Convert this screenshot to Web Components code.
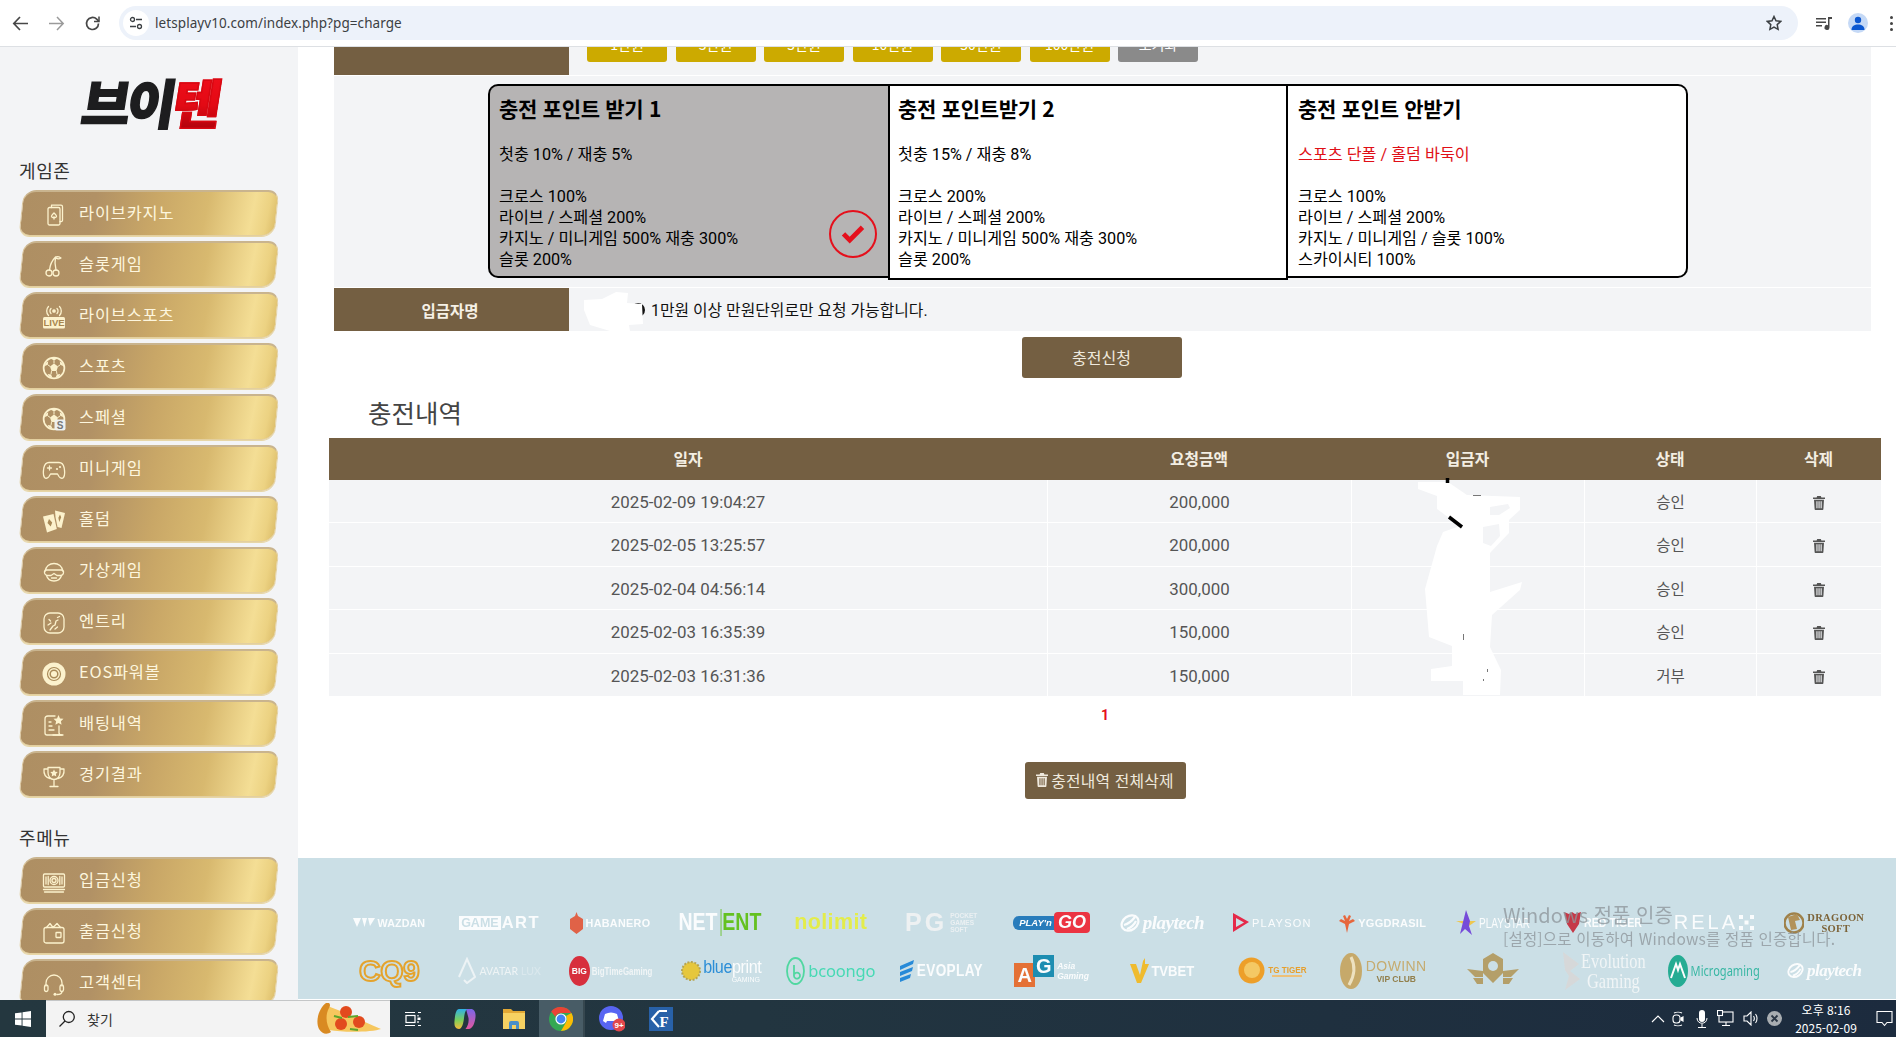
<!DOCTYPE html>
<html lang="ko"><head><meta charset="utf-8"><title>charge</title>
<style>
html,body{margin:0;height:100%;overflow:hidden;background:#fff}
body{width:1896px;height:1037px;display:flex;flex-direction:column;font-family:Roboto,"Noto Sans CJK KR",sans-serif;font-size:16px;color:#000}
</style></head><body>
<chrome-bar></chrome-bar>
<app-shell>
  <side-nav slot="side">
    <nav-group title="게임존">
      <nav-item icon="casino">라이브카지노</nav-item>
      <nav-item icon="slot">슬롯게임</nav-item>
      <nav-item icon="live">라이브스포츠</nav-item>
      <nav-item icon="ball">스포츠</nav-item>
      <nav-item icon="special">스페셜</nav-item>
      <nav-item icon="pad">미니게임</nav-item>
      <nav-item icon="cards">홀덤</nav-item>
      <nav-item icon="vr">가상게임</nav-item>
      <nav-item icon="entry">엔트리</nav-item>
      <nav-item icon="eos">EOS파워볼</nav-item>
      <nav-item icon="bets">배팅내역</nav-item>
      <nav-item icon="trophy">경기결과</nav-item>
    </nav-group>
    <nav-group title="주메뉴" class="second">
      <nav-item icon="money">입금신청</nav-item>
      <nav-item icon="wallet">출금신청</nav-item>
      <nav-item icon="headset">고객센터</nav-item>
    </nav-group>
  </side-nav>
  <charge-form></charge-form>
  <history-table></history-table>
  <provider-footer></provider-footer>
  <redaction-marks></redaction-marks>
</app-shell>
<win-taskbar></win-taskbar>
<script>
const def=(name,html,extra)=>{customElements.define(name,class extends HTMLElement{
  constructor(){super();this.attachShadow({mode:'open'}).innerHTML=html;if(extra)extra.call(this)}
})};
const TRASH='<svg width="12" height="14" viewBox="0 0 12 14" fill="currentColor"><path d="M4.200 0h3.600l.6 1.400H12v1.500H0V1.400h3.600zM1 3.800h10l-.6 9.200c0 .6-.5 1-1 1H2.600c-.5 0-1-.4-1-1zm2.400 1.500v7h1.100v-7zm2.100 0v7h1.100v-7zm2.100 0v7h1.100v-7z"/></svg>';

def('chrome-bar',`<style>
:host{display:flex;align-items:center;height:46px;flex:none;background:#fff;border-bottom:1px solid #dde0e4;position:relative;z-index:3;overflow:hidden}
.nav{display:flex;width:119px;flex:none;padding-left:12px;box-sizing:border-box;gap:19px}
.omni{flex:none;width:1679px;height:34px;border-radius:17px;background:#edf2fa;display:flex;align-items:center;box-sizing:border-box;padding:0 16px 0 4px}
.tune{width:26px;height:26px;border-radius:50%;background:#fff;display:flex;align-items:center;justify-content:center;margin-right:6px}
.url{flex:1;font:13.500px "Noto Sans","Liberation Sans",sans-serif;color:#3c4043;letter-spacing:.08px}
.right{display:flex;align-items:center;flex:1;padding-left:17px;gap:15px}
.av{width:20px;height:20px;border-radius:50%;background:#c5d9f6;display:flex;align-items:center;justify-content:center;overflow:hidden}
.dots{display:flex;flex-direction:column;gap:3px}.dots i{width:3px;height:3px;border-radius:50%;background:#444}
</style>
<div class="nav">
<svg width="17" height="17" viewBox="0 0 17 17" fill="none" stroke="#474747" stroke-width="1.700"><path d="M16 8.500H2M8 2L1.800 8.500 8 15"/></svg>
<svg width="17" height="17" viewBox="0 0 17 17" fill="none" stroke="#9a9a9a" stroke-width="1.500"><path d="M1 8.500h14M9 2l6.200 6.500L9 15"/></svg>
<svg width="17" height="17" viewBox="0 0 17 17" fill="none" stroke="#474747" stroke-width="1.700"><path d="M14.500 8.500a6 6 0 1 1-1.800-4.300L15 6.500"/><path d="M15 1.500v5h-5" stroke-width="1.500"/></svg>
</div>
<div class="omni"><span class="tune"><svg width="14" height="14" viewBox="0 0 14 14" fill="none" stroke="#3c4043" stroke-width="1.300"><circle cx="3.500" cy="3.500" r="2"/><path d="M7 3.500h6M1 10.500h6"/><circle cx="10.500" cy="10.500" r="2"/></svg></span>
<span class="url">letsplayv10.com/index.php?pg=charge</span>
<svg width="16" height="16" viewBox="0 0 16 16" fill="none" stroke="#3c4043" stroke-width="1.500"><path d="M8 1.500l2 4.300 4.700.6-3.500 3.200.9 4.700L8 12l-4.100 2.300.9-4.700L1.300 6.400 6 5.800z"/></svg></div>
<div class="right">
<svg width="18" height="16" viewBox="0 0 18 16" fill="#474747"><path d="M1 3h10v1.500H1zM1 6.500h10V8H1zM1 10h6v1.500H1z"/><path d="M13 2h4v2h-2.500v8.500a2.500 2.500 0 1 1-1.500-2.300z"/></svg>
<span class="av"><svg width="16" height="16" viewBox="0 0 16 16" fill="#0b57d0"><circle cx="8" cy="5" r="3.200"/><path d="M1.500 15c0-4 3-5.500 6.500-5.500s6.500 1.500 6.500 5.500z"/></svg></span>
<span class="dots" style="margin-left:7px"><i></i><i></i><i></i></span>
</div>`);

def('app-shell',`<style>
:host{display:grid;grid-template-columns:298px 1fr;grid-template-rows:1fr;flex:1;min-height:0;position:relative;overflow:hidden}
.side{grid-column:1;min-height:0;overflow:hidden;display:flex}
.main{grid-column:2;min-height:0;overflow:hidden;display:flex;flex-direction:column;position:relative}
</style><div class="side"><slot name="side"></slot></div><div class="main"><slot></slot></div>`);

def('side-nav',`<style>
:host{display:block;width:298px;background:#f3f4f6;overflow:hidden}
.logo{height:101px;padding-top:30px;box-sizing:border-box;text-align:center;font:900 53px/48px "Noto Sans CJK KR",sans-serif;color:#1d1d1f;white-space:nowrap}
.logo span{display:inline-block;transform:skewX(-9deg);letter-spacing:-3.500px;-webkit-text-stroke:1.500px currentColor;margin-left:4px}
.logo b{font-weight:900;background:linear-gradient(180deg,#f4101e 0%,#e30a14 55%,#9c0009 100%);-webkit-background-clip:text;background-clip:text;color:transparent;-webkit-text-stroke:1.500px #d80812}
</style><div class="logo"><span>브이<b>텐</b></span></div><slot></slot>`);

def('nav-group',`<style>
:host{display:block;padding-left:19px}
:host(.second){margin-top:18px}
h3{margin:0;font:400 18px/24px "Noto Sans CJK KR",sans-serif;color:#333;height:42px;padding-top:10px;box-sizing:border-box;letter-spacing:.6px}
.list{display:flex;flex-direction:column;gap:5px;margin-left:1px}
</style><h3></h3><div class="list"><slot></slot></div>`,function(){
  this.shadowRoot.querySelector('h3').textContent=this.getAttribute('title')||'';
});

const S='fill="none" stroke="#fcf2cd" stroke-width="1.300" stroke-linecap="round" stroke-linejoin="round"';
const F='fill="#fcf2cd"';
const ball=`<circle cx="12" cy="12" r="10.400" fill="none" stroke="#fcf2cd" stroke-width="1.700"/><path fill="#fcf2cd" d="M12 7.500l4 2.900-1.500 4.700h-5L8 10.400zM8.500 2.500L12 4.400l3.500-1.900L12 1.500zM2.800 10l3-1.200.4-3.600-2.800 2zM21.200 10l-3-1.200-.4-3.600 2.800 2zM5.600 18l3.400.4 1.400 3-3.200-.9zM18.400 18l-3.400.4-1.400 3 3.200-.9z"/><path stroke="#fcf2cd" stroke-width="1" d="M12 4.400v3M8 10.400L5.800 8.800M16 10.400l2.200-1.600M9.500 15.100L9 18.400M14.500 15.100l.5 3.300"/>`;
const ICONS={
casino:`<g ${S}><rect x="6" y="4.500" width="12" height="17.500" rx="1.500"/><path d="M9.500 4.500V2.200h9.500a1.500 1.500 0 0 1 1.500 1.500v13.500c0 1-.5 1.500-2.500 1.500"/><path d="M12 10c1.500 1.500 2.500 2.200 2.500 3.300s-1.500 1.800-2.500.7c-1 1.100-2.500.4-2.500-.7s1-1.800 2.500-3.300zM12 14v2"/></g>`,
slot:`<g ${S}><circle cx="7" cy="19" r="3"/><circle cx="14" cy="19" r="3"/><path d="M7.500 16c.5-5 3-10 6-13 2-.8 4 0 5.500 1-2 1.500-3.500 1.500-5.500-1M13.500 3c-1 5-.5 9 .5 13"/></g>`,
live:`<g ${S} stroke-width="1"><circle cx="12" cy="6" r="1.200" fill="#fcf2cd"/><path d="M9 3.500a3.500 3.500 0 0 0 0 5M15 3.500a3.500 3.500 0 0 1 0 5M6.500 1.500a6.500 6.500 0 0 0 0 9M17.500 1.500a6.500 6.500 0 0 1 0 9"/></g><rect x="1" y="12" width="22" height="11.500" rx="1.500" fill="#fcf2cd"/><text x="12" y="21.300" text-anchor="middle" font-family="Liberation Sans" font-weight="700" font-size="9.500" fill="#a8864f">LIVE</text>`,
ball:ball,
special:ball+`<rect x="12.500" y="12.500" width="11" height="11" rx="2" fill="#eef0ef"/><text x="18" y="22" text-anchor="middle" font-family="Liberation Sans" font-weight="700" font-size="10" fill="#777">S</text>`,
pad:`<path ${S} stroke-width="1.500" d="M7 4.500h10c3 0 4.500 2 5.200 5.500.6 3.500.8 7.500-.7 9.500-1.500 1.500-3.500.5-4.500-1L15.500 16h-7L7 18.500c-1 1.500-3 2.500-4.500 1C1 17.500 1.200 13.500 1.800 10 2.500 6.500 4 4.500 7 4.500z"/><path ${S} stroke-width="1.500" d="M7.500 8v4M5.500 10h4"/><circle cx="15" cy="11" r="1.100" ${F}/><circle cx="18" cy="9" r="1.100" ${F}/>`,
cards:`<g ${F}><path d="M1 7.500l10.500-2.500 3.300 15-9.800 3.500z"/><path d="M13 1.500l10 2.500-3.500 15-4-1-2-10z"/></g><path fill="#a98a58" d="M7 10l3.200 3.500-1.500 4-3.200-3.500zM18 5.500l1.200 2.700-2 4.800-.8-4.300z"/>`,
vr:`<g ${S} stroke-width="1.400"><path d="M3.500 11c0-4.500 4-7.500 8.500-7.500s8.500 3 8.500 7.500"/><path d="M2.500 11.500c0-1 1-1.500 2-1.500h15c1 0 2 .5 2 1.500v1c0 2-2 3-4 3h-2.500L12 13.500 9 15.500H6.500c-2 0-4-1-4-3z"/><path d="M4.500 15.500c1 3.500 4 5.500 7.500 5.500s6.500-2 7.500-5.500"/><path d="M9.500 18h5"/></g>`,
entry:`<rect x="2" y="2" width="20" height="20" rx="6" ${S} stroke-width="1.500"/><g ${S} stroke-width="1.600"><path d="M7 8.500l1.500 1.500M15.500 6.500l2-1M8 19l3-4 2-1 1-4 2-1M13 18l2.500-2M6 14l3-2"/></g>`,
eos:`<circle cx="12" cy="12" r="11.500" fill="#fcf2cd"/><circle cx="12" cy="12" r="6.500" fill="none" stroke="#a98a58" stroke-width="1.200"/><circle cx="12" cy="12" r="3.800" fill="none" stroke="#a98a58" stroke-width="1.500"/>`,
bets:`<g ${S} stroke-width="1.400"><path d="M17 13v7c0 1.500 2 2 3 2H5c-1 0-2-1-2-2V6c0-2 1-3 3-3h7"/><path d="M7 9h2M7 13h3M7 17h5M21 22H11"/></g><path ${F} d="M16.500 2l1.500 3.400 3.500.4-2.600 2.400.7 3.500-3.100-1.800-3.100 1.800.7-3.500-2.600-2.400 3.500-.4z"/>`,
trophy:`<g ${S} stroke-width="1.500"><path d="M6 3.500h12v5c0 4-2.500 7-6 7s-6-3-6-7zM6 5H2c-.5 5 2 8.500 6 9.500M18 5h4c.5 5-2 8.500-6 9.500M12 15.500V22M8 22.500h8"/></g><path ${F} d="M12 5.500l1.200 2.300 2.500.3-1.800 1.800.4 2.500L12 11.300l-2.300 1.100.4-2.500L8.300 8.100l2.500-.3z"/>`,
money:`<g ${S} stroke-width="1.300"><rect x="1.500" y="4" width="21" height="13" rx="1"/><path d="M1.500 19.500h21M2.500 22h19"/><circle cx="12" cy="10.500" r="4"/><circle cx="12" cy="10.500" r="2"/><path d="M4 7v7M20 7v7M6.200 6.500v8M17.800 6.500v8"/></g>`,
wallet:`<g ${S} stroke-width="1.500"><rect x="2" y="6.500" width="20" height="15.500" rx="2"/><path d="M4.500 6.500L8 2.500l3 4M11 6.500l4-4 3.500 4"/><rect x="14" y="11.500" width="5" height="5" rx=".5"/></g>`,
headset:`<g ${S} stroke-width="1.700"><path d="M4 14V11a8 8 0 0 1 16 0v3"/><rect x="2.500" y="13" width="3.500" height="6.500" rx="1.700"/><rect x="18" y="13" width="3.500" height="6.500" rx="1.700"/><path d="M20 19.500c0 2-2 3-5 3"/></g><circle cx="13" cy="22.300" r="1.500" ${F}/>`
};
def('nav-item',`<style>
:host{display:block;position:relative;height:46px;width:258px}
.bg{position:absolute;inset:0 1px;transform:skewX(-6deg);border-radius:13px 11px 13px 11px;box-sizing:border-box;
background:linear-gradient(96deg,#ae8f63 0%,#b19165 28%,#c9a767 52%,#d8b96f 72%,#f4de95 90%,#ecd282 96%,#dcbd6a 100%);
border:1px solid #e3cf9f;border-top:2px solid #c9b48e;border-left-color:#d9c39a;box-shadow:0 1px 0 #e7d6a6}
.row{position:relative;display:flex;align-items:center;height:100%}
.ic{width:24px;height:24px;margin-left:22px;margin-right:13px;flex:none;margin-top:3px}
.t{color:#fdf6de;font:400 16.400px/1 "Noto Sans CJK KR",sans-serif;letter-spacing:.8px;margin-top:-2px;white-space:nowrap}
</style><div class="bg"></div><div class="row"><svg class="ic" viewBox="0 0 24 24"></svg><span class="t"><slot></slot></span></div>`,function(){
  this.shadowRoot.querySelector('svg').innerHTML=ICONS[this.getAttribute('icon')]||'';
});

def('point-card',`<style>
:host{display:block;width:400px;box-sizing:border-box;height:194px;border:2px solid #000;border-right-width:0;background:#fff;padding:7px 8px 0;position:relative;color:#000;flex:none}
:host(.first){background:#b6b4b4;border-radius:10px 0 0 10px;padding-left:9px}
:host(.mid){height:196px;border-right-width:2px}
:host(.last){border-radius:0 10px 10px 0;border-right-width:2px;border-left-width:0;padding-left:10px}
h4{margin:0;font:700 21px/31px "Noto Sans CJK KR",Roboto,sans-serif;letter-spacing:-.3px;height:51px;white-space:nowrap}
::slotted(p){margin:0;font:400 16.200px/21px Roboto,"Noto Sans CJK KR",sans-serif;white-space:nowrap}
::slotted(.gap){margin-bottom:21px}
::slotted(.red){color:#e00f17}
.chk{display:none;position:absolute;left:339px;top:124px;width:48px;height:48px;box-sizing:border-box;border:2px solid #e5101c;border-radius:50%;align-items:center;justify-content:center}
:host(.first) .chk{display:flex}
</style><h4></h4><slot></slot><span class="chk"><svg width="24" height="20" viewBox="0 0 24 20"><path fill="#e5101c" d="M8.700 19.500L.8 11.600l3.400-3.400 4.500 4.500L19.800 1.500l3.400 3.400z"/></svg></span>`,function(){
  this.shadowRoot.querySelector('h4').textContent=this.getAttribute('heading');
});

def('charge-form',`<style>
:host{display:block;padding:0 25px 0 36px}
.r{display:grid;grid-template-columns:235px 1fr;background:#f3f4f6}
.l{background:#745f42;color:#f6f1e6;font:700 15.500px "Noto Sans CJK KR",sans-serif;display:flex;align-items:center;justify-content:center;padding-right:3px;box-sizing:border-box}
.amt{height:28px;overflow:hidden;border-bottom:1px solid #fff;align-items:end}
.amt .l{height:28px}
.btns{display:flex;align-self:start;gap:8.500px;padding-left:18px;height:15px;align-items:flex-end}
.btns span{flex:none;width:80px;height:36px;border-radius:3px;background:#ccaa00;color:#fff;font:400 14px/36px "Noto Sans CJK KR",sans-serif;text-align:center}
.btns span.g{background:#8a8a8a}
.cards{height:212px;background:#f3f4f6;border-bottom:1px solid #fff;padding:8px 0 0 154px;box-sizing:border-box;display:flex;align-items:flex-start}
.dep{height:43px}
.note{display:flex;align-items:center;padding-left:62px;color:#111;font:400 15.850px Roboto,"Noto Sans CJK KR",sans-serif;gap:6px}
.note i{width:14px;height:14px;border-radius:50%;background:#111;flex:none}
.sub{display:flex;justify-content:center;margin:6px 0 0;padding-right:2px}
.sub span{width:160px;height:41px;border-radius:3px;background:#745f42;color:#efe9dd;font:400 16px/41px "Noto Sans CJK KR",sans-serif;text-align:center}
</style>
<div class="r amt"><div class="l"></div><div class="btns"><span>1만원</span><span>3만원</span><span>5만원</span><span>10만원</span><span>50만원</span><span>100만원</span><span class="g">초기화</span></div></div>
<div class="cards">
<point-card class="first" heading="충전 포인트 받기 1"><p class="gap">첫충 10% / 재충 5%</p><p>크로스 100%</p><p>라이브 / 스페셜 200%</p><p>카지노 / 미니게임 500% 재충 300%</p><p>슬롯 200%</p></point-card>
<point-card class="mid" heading="충전 포인트받기 2"><p class="gap">첫충 15% / 재충 8%</p><p>크로스 200%</p><p>라이브 / 스페셜 200%</p><p>카지노 / 미니게임 500% 재충 300%</p><p>슬롯 200%</p></point-card>
<point-card class="last" heading="충전 포인트 안받기"><p class="gap red">스포츠 단폴 / 홀덤 바둑이</p><p>크로스 100%</p><p>라이브 / 스페셜 200%</p><p>카지노 / 미니게임 / 슬롯 100%</p><p>스카이시티 100%</p></point-card>
</div>
<div class="r dep"><div class="l">입금자명</div><div class="note"><i></i><span>1만원 이상 만원단위로만 요청 가능합니다.</span></div></div>
<div class="sub"><span>충전신청</span></div>`);

const rows=[['2025-02-09 19:04:27','200,000','승인'],['2025-02-05 13:25:57','200,000','승인'],['2025-02-04 04:56:14','300,000','승인'],['2025-02-03 16:35:39','150,000','승인'],['2025-02-03 16:31:36','150,000','거부']];
def('history-table',`<style>
:host{display:block;padding:0 15px 0 31px;color:#555}
h2{margin:0;padding-left:39px;height:60px;box-sizing:border-box;font:400 25.500px/68px "Noto Sans CJK KR",sans-serif;color:#444}
.g{display:grid;grid-template-columns:718px 304px 233px 172px 125px}
.h{background:#745f42;height:42px;color:#f3eee3;font:700 15.800px/42px "Noto Sans CJK KR",sans-serif;text-align:center}
.rw{height:43.400px;background:#f3f4f6;border-bottom:1px solid #fff;box-sizing:border-box;font:400 15.500px/42px "Noto Sans CJK KR",sans-serif;text-align:center}
.rw span{border-left:1px solid #fff;height:100%}.rw span:first-child{border:0}
.rw .n{font:400 16.900px/44px Roboto,sans-serif}
.rw svg{vertical-align:-2px;color:#555}
.pg{text-align:center;color:#e5101c;font:700 14px/34px Roboto,sans-serif;height:64px;padding-top:1px}
.del{display:flex;justify-content:center}
.del span{width:161px;height:37px;box-sizing:border-box;border-radius:3px;background:#745f42;color:#efe9dd;font:400 15.800px/37px "Noto Sans CJK KR",sans-serif;display:flex;align-items:center;justify-content:center;gap:3px;letter-spacing:.2px;white-space:nowrap}
</style>
<h2>충전내역</h2>
<div class="g h"><span>일자</span><span>요청금액</span><span>입금자</span><span>상태</span><span>삭제</span></div>
${rows.map(r=>`<div class="g rw"><span class="n">${r[0]}</span><span class="n">${r[1]}</span><span></span><span>${r[2]}</span><span>${TRASH}</span></div>`).join('')}
<div class="pg">1</div>
<div class="del"><span>${TRASH}충전내역 전체삭제</span></div>`);

const bold="font-family:'Liberation Sans',sans-serif;font-weight:700;";
const t=(txt,st)=>`<span style="${st.replace(/"/g,"'")}">${txt}</span>`;
const swoosh=(w,h)=>`<svg width="${w}" height="${h}" viewBox="0 0 20 20" fill="none" stroke="#fff" stroke-width="2.200"><ellipse cx="10" cy="10" rx="9" ry="7" transform="rotate(-35 10 10)"/><path d="M4 12c4-1 8-4 11-8M7 16c3-1 7-4 9-8"/></svg>`;
const L=[
`<svg width="22" height="9" viewBox="0 0 22 9" fill="#fff"><path d="M0 0h8L4 9zM9 0h5l-2.500 9zM15 0h7l-5 8z"/></svg>`+t('WAZDAN',bold+'font-size:10.500px;color:#fff;letter-spacing:.1px;transform:scaleX(1.02)'),
`<span style="display:flex;align-items:center">`+t('GAME',bold+'background:#fff;color:#cbdfe6;font-size:12.500px;padding:0 2px;line-height:14px')+t('ART',bold+'color:#fff;font-size:16.500px;letter-spacing:1.500px;margin-left:1px')+`</span>`,
`<svg width="13" height="22" viewBox="0 0 13 22"><path fill="#e2583a" d="M6.500 0l1.500 4 5 3v10l-6.500 5L0 17V7l5-3z"/></svg>`+t('HABANERO',bold+'color:#fff;font-size:10.800px;letter-spacing:.3px'),
`<span style="display:flex;align-items:center">`+t('NET',bold+'color:#fff;font-size:23px;transform:scaleX(.85);margin-right:-3px')+t('ENT',bold+'color:#5cbf10;font-size:23px;transform:scaleX(.85);border-left:1px solid #5cbf10;padding-left:1px;margin-left:-1px')+`</span>`,
t('nolimit',bold+'color:#e6ee3e;font-size:21.500px;letter-spacing:.4px'),
t('PG',bold+'color:#f1f3f4;font-size:25px;letter-spacing:3px')+t('POCKET<br>GAMES<br>SOFT',bold+'color:#eef2f4;font-size:6.500px;line-height:7px;text-align:left'),
`<span style="display:flex;align-items:center">`+t("PLAY'n",bold+'font-style:italic;background:#1b74b8;color:#fff;font-size:9.500px;padding:0 4px 0 6px;border-radius:6px 0 0 6px;line-height:14px')+t('GO',bold+'font-style:italic;background:#ee2635;color:#fff;font-size:18px;padding:0 4px;border-radius:4px;line-height:21px;margin-left:-2px')+`</span>`,
swoosh(20,20)+t('playtech','font:italic 700 19px "Liberation Serif",serif;color:#fff;letter-spacing:-.5px'),
`<svg width="16" height="19" viewBox="0 0 16 19"><path fill="#e81a3c" fill-rule="evenodd" d="M0 0l16 9-16 10zM3 5v9l8-4.500z"/></svg>`+t('PLAYSON','font:400 11px "Liberation Sans",sans-serif;color:#fff;letter-spacing:1.200px'),
`<svg width="16" height="20" viewBox="0 0 16 20" fill="#ea5c2e"><path d="M8 20l-2-9L0 8l2-2 4 2L4 3l2-1 2 4 2-4 2 1-2 5 4-2 2 2-6 3z"/></svg>`+t('YGGDRASIL',bold+'color:#fff;font-size:11px;letter-spacing:.3px'),
`<svg width="20" height="26" viewBox="0 0 20 26"><path fill="#f1c543" d="M0 11h20l-7 5z"/><path fill="#6f3fd8" d="M10 0l4 11-1 5 3 9-7-6-5 5 3-12z"/></svg>`+t('PLAYSTAR','font:400 14px "Liberation Sans",sans-serif;color:#fff;transform:scaleX(.72);margin:0 -10px'),
`<svg width="17" height="21" viewBox="0 0 17 21" fill="#c52b3b"><path d="M0 0l5 2 3-2 3 2 6-2-2 12-6 9-6-9z"/></svg>`+t('RED TIGER',bold+'color:#fff;font-size:12.500px;transform:scaleX(.85);margin:0 -5px'),
t('RELA','font:400 20px "Liberation Sans",sans-serif;color:#fff;letter-spacing:3px;margin-right:-2px')+`<svg width="15" height="15" viewBox="0 0 15 15" fill="#fff"><rect x="0" y="0" width="4" height="4"/><rect x="11" y="0" width="4" height="4"/><rect x="5.500" y="5.500" width="4" height="4"/><rect x="0" y="11" width="4" height="4"/><rect x="11" y="11" width="4" height="4"/></svg>`,
`<svg width="20" height="30" viewBox="0 0 20 30"><circle cx="10" cy="15" r="9.500" fill="none" stroke="#9c7a3d" stroke-width="2.500"/><path fill="#b08c4e" d="M4 9l9-3 3 6-5 1 2 8-6 1z"/></svg>`+t('DRAGOON<br>SOFT','font:700 10.500px/11px "Liberation Serif",serif;color:#76592a;text-align:center;letter-spacing:.3px'),

t('CQ9','font:700 30px/1 "Liberation Sans",sans-serif;color:transparent;-webkit-text-stroke:2px #e79e1d;letter-spacing:-.5px'),
`<svg width="18" height="27" viewBox="0 0 18 27" fill="none" stroke="#f0f5f7" stroke-width="2"><path d="M1 20L9 2l8 18-8 6-3-3"/></svg>`+t('AVATAR','font:400 10.500px Lato,sans-serif;color:#f2f6f7')+t('LUX','font:400 10.500px Lato,sans-serif;color:#dce9ee'),
`<span style="width:21px;height:30px;border-radius:50%;background:#d9212f;color:#fff;${bold}font-size:8.500px;display:flex;align-items:center;justify-content:center">BIG</span>`+t('BigTimeGaming',bold+'font-size:11px;color:#f4f7f8;transform:scaleX(.72);margin:0 -13px'),
`<svg width="20" height="20" viewBox="0 0 20 20"><circle cx="10" cy="10" r="9" fill="#e9c62e" stroke="#b4a047" stroke-dasharray="2 1.500" stroke-width="2"/></svg><span style="display:flex;flex-direction:column;align-items:flex-end;line-height:1">`+t('<span style="color:#1f88d6">blue</span>print','font:400 19px/18px "Liberation Sans",sans-serif;color:#fff;transform:scaleX(.85);margin:0 -6px;letter-spacing:-.5px')+t('GAMING','font:400 7px "Liberation Sans",sans-serif;color:#fff')+`</span>`,
`<svg width="19" height="28" viewBox="0 0 19 28" fill="none" stroke="#46d79b" stroke-width="1.800"><ellipse cx="9.500" cy="14" rx="8.500" ry="13"/><path d="M8 8v11a3 3 0 1 0 .5-2"/></svg>`+t('bcoongo','font:400 16.500px "Noto Sans",sans-serif;color:#3cd9b0;letter-spacing:-.2px'),
`<svg width="14" height="22" viewBox="0 0 14 22" fill="#1a83d7"><path d="M0 6l14-6-1 4L0 10zM0 12l13-5-1 4L0 16zM0 18l11-4-1 4-10 4z"/></svg>`+t('EVOPLAY',bold+'color:#fff;font-size:16px;letter-spacing:.4px;transform:scaleX(.85);margin:0 -6px'),
`<span style="display:flex;position:relative;width:40px;height:32px"><span style="position:absolute;left:0;bottom:0;width:21px;height:24px;background:#e76828;color:#fff;${bold}font-size:20px;line-height:24px;text-align:center">A</span><span style="position:absolute;right:0;top:0;width:21px;height:22px;background:#0f87ad;color:#fff;${bold}font-size:20px;line-height:22px;text-align:center">G</span></span>`+t('Asia<br>Gaming',bold+'font-style:italic;color:#fff;font-size:8.500px;line-height:10px;text-align:left'),
`<svg width="19" height="25" viewBox="0 0 19 25" fill="#f3b81f"><path d="M0 6h6l4 11 3-14 2-3v6l4 0-8 19H7z"/></svg>`+t('TVBET',bold+'color:#fff;font-size:14.500px;transform:scaleX(.9);margin:0 -3px'),
`<svg width="27" height="27" viewBox="0 0 27 27"><circle cx="13.500" cy="13.500" r="13" fill="#f09a1a"/><circle cx="14" cy="13" r="8" fill="#f8c75a"/></svg>`+`<span style="display:flex;flex-direction:column;align-items:center">`+t('TG TIGER',bold+'color:#e99a1e;font-size:9.500px;transform:scaleX(.85);margin:0 -3px')+t('','background:#f1be6e;width:30px;height:2px')+`</span>`,
`<svg width="24" height="38" viewBox="0 0 24 38"><ellipse cx="12" cy="19" rx="11" ry="18" fill="#c6a560"/><path d="M12 5c4 8 4 18-2 28" stroke="#f0e2bd" stroke-width="3" fill="none"/></svg>`+`<span style="display:flex;flex-direction:column;align-items:center">`+t('DOWINN','font:400 14px "Liberation Sans",sans-serif;color:#c5a766;letter-spacing:.4px')+t('VIP CLUB',bold+'color:#8e7840;font-size:8.500px')+`</span>`,
`<svg width="52" height="36" viewBox="0 0 52 36"><path fill="#b39a5f" d="M26 0l10 6v14l-10 10-10-10V6zM0 16l16 2v6l-8 0zM52 16l-16 2v6l8 0zM6 25h10v6H10zM46 25H36v6h6z"/><circle cx="26" cy="13" r="5" fill="#cbdfe6"/></svg>`,
`<svg width="17" height="38" viewBox="0 0 17 38"><path fill="#d8d8d8" d="M0 0l16 12-9 7 10 8-15 11 4-14-4-6z"/></svg>`+t('Evolution<br>Gaming','font:400 21px/20px "Liberation Serif",serif;color:#f4f7f8;text-align:center;transform:scaleX(.78);margin:0 -11px'),
`<svg width="20" height="32" viewBox="0 0 20 32"><ellipse cx="10" cy="16" rx="10" ry="16" fill="#18a88c"/><path d="M3 23L8 9l2 6 2-6 5 14" stroke="#fff" stroke-width="2" fill="none"/></svg>`+t('Microgaming','font:400 13.500px "Noto Sans",sans-serif;color:#2db49f;transform:scaleX(.82);margin:0 -8px'),
swoosh(17,17)+t('playtech','font:italic 700 17px "Liberation Serif",serif;color:#fff;letter-spacing:-.5px')
];
def('provider-footer',`<style>
:host{display:block;margin-top:59px;padding:41px 17px 0 36px;background:#cbdfe6;height:141px;box-sizing:border-box;position:relative;overflow:hidden;flex:none}
.g{display:grid;grid-template-columns:repeat(14,110.400px);grid-auto-rows:48px}
.c{display:flex;align-items:center;justify-content:center;gap:3px;white-space:nowrap;opacity:.92}
.c span{display:inline-block}
.c>span[style*="flex"]{display:flex}
.wm{position:absolute;left:1205px;top:44px;color:#8f979c;opacity:.78;font:400 20px/25px "Noto Sans CJK KR",sans-serif;pointer-events:none;white-space:nowrap}
.wm small{display:block;font-size:15.500px;line-height:22px;letter-spacing:.2px}
</style><div class="g">${L.map(x=>`<div class="c">${x}</div>`).join('')}</div>
<div class="wm">Windows 정품 인증<small>[설정]으로 이동하여 Windows를 정품 인증합니다.</small></div>`);

def('redaction-marks',`<style>:host{position:absolute;left:0;top:0;width:1598px;height:660px;pointer-events:none}svg{position:absolute;left:0;top:0}</style>
<svg width="1598" height="660" viewBox="298 47 1598 660">
<path fill="#fff" d="M1418 482h30l19 13 53 2v13l-11 10v13l-19 20v39l32-10-2 8-28 25-2 32 11 23-1 25h-37v-14h-32v-12l21-3v-20l-23-9-4-48 12-43 6-14 17-6-23-17v-13l-19-7z"/>
<path fill="#f3f4f6" d="M1490 507l18-3 2 4-11 7-9 0zM1483 527l16-3 1 12-9 10-8-3z"/>
<path stroke="#000" stroke-width="3.500" fill="none" d="M1449 517l13 10M1447.500 478v5"/>
<path fill="#777" d="M1473 495h8v1h-8zM1463 634h1v6h-1zM1487 669h1v3h-1zM1483 679h1v2h-1z"/>
<path fill="#fff" d="M584 300l18-1 14-7 12 1-1 10 15 1 1 20-14 1 1 6h-20l-20-6-6-15z"/>
</svg>`);

def('win-taskbar',`<style>
:host{display:flex;align-items:center;height:37px;flex:none;background:linear-gradient(90deg,#24373f 0%,#223540 40%,#1c2b3e 100%);position:relative;z-index:3;color:#fff}
.st{width:46px;display:flex;justify-content:center;flex:none}
.s{width:344px;height:37px;background:#f3f3f3;box-sizing:border-box;border-top:1px solid #c4c6c7;display:flex;align-items:center;padding-left:12px;color:#333;font:400 14px "Noto Sans CJK KR",sans-serif;gap:7px;flex:none}
.pz{margin-left:auto;margin-right:8px}
.apps{display:flex;align-items:center;height:100%;flex:1}
.a{width:49px;height:37px;display:flex;align-items:center;justify-content:center;flex:none}
.a.tv{width:46px}
.a.on{background:#485c66;border-right:2px solid #36474f;box-sizing:border-box;width:46px}
.tray{display:flex;align-items:center;height:100%}
.tray>*{flex:none}
.clk{width:78px;text-align:center;font:400 12px/17.500px "Noto Sans CJK KR",Roboto,sans-serif;color:#fff}
</style>
<div class="st"><svg width="16" height="16" viewBox="0 0 16 16" fill="#fff"><path d="M0 2.300l6.600-.9v6.200H0zM7.500 1.300L16 0v7.600H7.500zM0 8.400h6.600v6.200L0 13.700zM7.500 8.400H16V16l-8.500-1.300z"/></svg></div>
<div class="s"><svg width="18" height="18" viewBox="0 0 18 18" fill="none" stroke="#222" stroke-width="1.300"><circle cx="10.800" cy="7" r="5.500"/><path d="M7 11L1.500 16.500"/></svg><span style="margin-left:4px">찾기</span>
<svg class="pz" width="66" height="32" viewBox="0 0 66 32"><path fill="#f6c75e" d="M8 2c14 4 38 16 57 24-8 3-36 4-52 1C6 24 2 12 8 2z"/><path fill="#d98a22" d="M10 0c4-1 5 2 3 5C9 12 10 22 15 29c-4 3-9 2-12-3C-1 18 3 5 10 0z"/><circle cx="30" cy="9" r="6" fill="#e24a1e"/><circle cx="25" cy="21" r="6" fill="#e24a1e"/><circle cx="43" cy="19" r="6" fill="#e24a1e"/><path d="M18 13l8 2M32 14l10-1M34 26l8 1" stroke="#5da52b" stroke-width="2"/></svg></div>
<div class="apps">
<div class="a tv"><svg width="16" height="16" viewBox="0 0 16 16" fill="none" stroke="#fff" stroke-width="1.200"><path d="M0 1.500h10M0 14.500h10"/><rect x="1" y="4.500" width="9" height="7"/><path d="M13 1.500h3M13 14.500h3M13 4v1.500M13 10v2"/><rect x="12.500" y="6.500" width="3" height="2.500" fill="#fff" stroke="none"/></svg></div>
<div class="a" style="margin-left:4.500px"><svg width="24" height="24" viewBox="0 0 24 24"><defs><linearGradient id="cp" x1="0" y1="0" x2="0" y2="1"><stop offset="0" stop-color="#2fb0e8"/><stop offset=".55" stop-color="#7ad05b"/><stop offset="1" stop-color="#f6b93a"/></linearGradient><linearGradient id="cq" x1="0" y1="0" x2="0" y2="1"><stop offset="0" stop-color="#7a66e8"/><stop offset="1" stop-color="#e2579f"/></linearGradient></defs><path fill="url(#cq)" d="M13 2h5c3 0 5 3 4.500 8-.5 5-2.500 12-7 12h-3c2.500-3 3.500-7 3-11z"/><path fill="url(#cp)" d="M6 2h8c-2 2-2.500 5-3 9-.5 5-2 11-5 11-3.500 0-5-3-4.500-8C2 8 3 2 6 2z"/></svg></div>
<div class="a"><svg width="24" height="22" viewBox="0 0 24 22"><path fill="#e2a835" d="M1 1h8l2 2h12v6H1z"/><path fill="#f6d162" d="M1 5h22v16H1z"/><path fill="#4a8fc9" d="M7 21v-6a2 2 0 0 1 2-2h6a2 2 0 0 1 2 2v6h-3v-4h-4v4z"/></svg></div>
<div class="a on"><svg width="24" height="24" viewBox="0 0 24 24"><circle cx="12" cy="12" r="12" fill="#34a853"/><path fill="#ea4335" d="M12 0a12 12 0 0 1 10.400 6H12a6 6 0 0 0-5.600 3.800L2.200 4.500A12 12 0 0 1 12 0z"/><path fill="#fbbc05" d="M22.400 6A12 12 0 0 1 12 24l5.200-9A6 6 0 0 0 17 9z"/><circle cx="12" cy="12" r="5.600" fill="#fff"/><circle cx="12" cy="12" r="4.400" fill="#4285f4"/></svg></div>
<div class="a" style="margin-left:2.500px"><svg width="26" height="26" viewBox="0 0 26 26"><circle cx="12" cy="12" r="12" fill="#5865f2"/><path fill="#fff" d="M6 8c4-2 8-2 12 0l2 7-3 2-1-2H8l-1 2-3-2z"/><circle cx="20" cy="19" r="6.500" fill="#e2474c"/><text x="20" y="22" font-family="Liberation Sans" font-size="8" font-weight="700" text-anchor="middle" fill="#fff">9+</text></svg></div>
<div class="a"><svg width="24" height="24" viewBox="0 0 24 24"><rect width="24" height="24" fill="#2861a8"/><path fill="none" stroke="#fff" stroke-width="2.200" d="M10 4L3 12l7 8M10 4l8 0"/><text x="15" y="20" font-family="Liberation Serif" font-weight="700" font-size="15" text-anchor="middle" fill="#fff">F</text></svg></div>
</div>
<div class="tray">
<svg width="14" height="8" viewBox="0 0 14 8" fill="none" stroke="#fff" stroke-width="1.100" style="margin-right:7px"><path d="M1 7l6-6 6 6"/></svg>
<svg width="12" height="16" viewBox="0 0 12 16" fill="none" stroke="#fff" stroke-width="1.100" style="margin-right:12px"><path d="M2 2c2-1 6-1 8 0M2 14c2 1 6 1 8 0"/><rect x="1" y="4" width="7" height="8" rx="3"/><path d="M9 7l2-1v4l-2-1z" fill="#fff"/></svg>
<svg width="12" height="18" viewBox="0 0 12 18" fill="#fff" style="margin-right:9px"><rect x="3" y="0" width="6" height="12" rx="3"/><path d="M1 8c0 7 10 7 10 0M6 14v3M2 17.500h8" fill="none" stroke="#fff"/></svg>
<svg width="17" height="17" viewBox="0 0 17 17" fill="none" stroke="#fff" stroke-width="1.100" style="margin-right:9px"><rect x="2" y="2" width="14" height="10"/><path d="M9 12v3M5 15.500h8"/><rect x="0.500" y="0.500" width="5" height="5" fill="#1c2b3e"/></svg>
<svg width="15" height="15" viewBox="0 0 15 15" fill="none" stroke="#fff" stroke-width="1.100" style="margin-right:9px"><path d="M1 5h3l4-4v13l-4-4H1zM10.500 5c1 1.500 1 3.500 0 5M12.500 3c2 2.500 2 6.500 0 9"/></svg>
<svg width="15" height="15" viewBox="0 0 15 15" style="margin-right:5px"><circle cx="7.500" cy="7.500" r="7.500" fill="#a8adb1"/><path d="M4.500 4.500l6 6M10.500 4.500l-6 6" stroke="#2a3644" stroke-width="1.800"/></svg>
<div class="clk">오후 8:16<br>2025-02-09</div>
<svg width="17" height="17" viewBox="0 0 17 17" fill="none" stroke="#fff" stroke-width="1.100" style="margin:0 3px 0 11px"><path d="M1 1.500h15v11h-5l-2.500 3-2.500-3H1z"/></svg>
</div>`);
</script>
</body></html>
